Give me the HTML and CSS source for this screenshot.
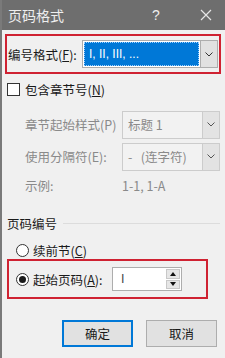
FILE: index.html
```html
<!DOCTYPE html>
<html lang="zh-CN">
<head>
  <meta charset="UTF-8">
  <meta name="viewport" content="width=device-width, initial-scale=1.0">
  <title>页码格式</title>
  <link rel="stylesheet" href="styles.css">
</head>
<body>
  <div class="dialog">
    <!-- title bar -->
    <div class="titlebar">
      <span class="title">页码格式</span>
      <span class="help">?</span>
      <span class="close">
        <svg width="12" height="12" viewBox="0 0 12 12"><path d="M1 1L11 11M11 1L1 11" stroke="#e6e6e6" stroke-width="1.2" fill="none"/></svg>
      </span>
    </div>

    <!-- number format -->
    <div class="redbox format-row">
      <span class="label">编号格式(<u>F</u>):</span>
      <div class="combo active">
        <div class="combo-value"><span class="focus">I, II, III, ...</span></div>
        <div class="combo-btn">
          <svg width="8" height="5" viewBox="0 0 8 5"><path d="M0.5 0.5L4 4L7.5 0.5" stroke="#333" fill="none"/></svg>
        </div>
      </div>
    </div>

    <div class="check-row">
      <span class="checkbox"></span>
      <span>包含章节号(<u>N</u>)</span>
    </div>

    <div class="chapter">
      <div class="field">
        <span class="label">章节起始样式(P)</span>
        <div class="combo disabled">
          <div class="combo-value">标题 1</div>
          <div class="combo-btn">
            <svg width="8" height="5" viewBox="0 0 8 5"><path d="M0.5 0.5L4 4L7.5 0.5" stroke="#555" fill="none"/></svg>
          </div>
        </div>
      </div>
      <div class="field">
        <span class="label">使用分隔符(E):</span>
        <div class="combo disabled">
          <div class="combo-value">-&nbsp;&nbsp;&nbsp;(连字符)</div>
          <div class="combo-btn">
            <svg width="8" height="5" viewBox="0 0 8 5"><path d="M0.5 0.5L4 4L7.5 0.5" stroke="#555" fill="none"/></svg>
          </div>
        </div>
      </div>
      <div class="field sample">
        <span class="label">示例:</span>
        <span>1-1, 1-A</span>
      </div>
    </div>

    <!-- page numbering -->
    <div class="group-title">
      <span>页码编号</span>
      <span class="rule"></span>
    </div>

    <div class="radio-row">
      <span class="radio"></span>
      <span>续前节(<u>C</u>)</span>
    </div>

    <div class="redbox start-row">
      <span class="radio checked"></span>
      <span class="label">起始页码(<u>A</u>):</span>
      <div class="spin">
        <div class="spin-value">I</div>
        <div class="spin-btns">
          <div class="spin-btn"><svg width="6" height="4" viewBox="0 0 6 4"><path d="M0 4L3 0L6 4Z" fill="#111"/></svg></div>
          <div class="spin-btn"><svg width="6" height="4" viewBox="0 0 6 4"><path d="M0 0L3 4L6 0Z" fill="#111"/></svg></div>
        </div>
      </div>
    </div>

    <div class="buttons">
      <button class="btn default">确定</button>
      <button class="btn">取消</button>
    </div>
  </div>
</body>
</html>
```

FILE: styles.css
```css
* {
  box-sizing: border-box;
}

body {
  margin: 0;
  font-family: "Noto Sans CJK SC", "Noto Sans", sans-serif;
  font-size: 12.5px;
  color: #1a1a1a;
  background: #f0f0f0;
}

.dialog {
  width: 225px;
  height: 358px;
  background: #f0f0f0;
  border-left: 2px solid #7a7a7a;
  overflow: hidden;
}

.titlebar {
  height: 30px;
  margin-left: -2px;
  background: #6e6e6e;
  color: #eeeeee;
  display: flex;
  align-items: center;
  padding-left: 8px;
}

.title {
  font-size: 14px;
  flex: 1;
}

.help {
  width: 20px;
  font-family: "Liberation Sans", sans-serif;
  font-size: 14px;
  margin-right: 28px;
}

.close {
  width: 25px;
  display: flex;
}

.redbox {
  border: 2px solid #cf2232;
  display: flex;
  align-items: center;
}

.format-row {
  margin: 4px 4px 0 3px;
  height: 40px;
  padding-left: 1px;
  padding-right: 1px;
}

.format-row .label {
  flex: 1;
}

.combo {
  display: flex;
  height: 28px;
  border: 1px solid #adadad;
}

.format-row .combo {
  width: 136px;
  background: #fff;
}

.combo-value {
  flex: 1;
  display: flex;
  align-items: center;
  padding: 1px;
}

.combo.active .focus {
  display: flex;
  align-items: center;
  width: 100%;
  height: 100%;
  background: #0078d7;
  color: #fff;
  padding-left: 4px;
  border: 1px dotted #9ccfff;
  font-family: "Liberation Sans", Arial, sans-serif;
  font-size: 12px;
}

.combo-btn {
  width: 17px;
  display: flex;
  align-items: center;
  justify-content: center;
  background: #e1e1e1;
  border-left: 1px solid #adadad;
}

.check-row {
  margin: 6px 0 0 5px;
  height: 18px;
  display: flex;
  align-items: center;
}

.checkbox {
  width: 13px;
  height: 13px;
  border: 1px solid #333;
  background: #fff;
  margin-right: 5px;
}

.chapter {
  padding-left: 23px;
  color: #8a8a8a;
}

.field {
  display: flex;
  align-items: center;
  height: 27px;
  margin-top: 5px;
  padding-right: 5px;
}

.field:first-child {
  margin-top: 13px;
}

.field .label {
  width: 97px;
}

.combo.disabled {
  flex: 1;
  border-color: #cccccc;
  background: #f2f2f2;
}

.combo.disabled .combo-value {
  padding-left: 5px;
}

.combo.disabled .combo-btn {
  background: #e3e3e3;
  border-left-color: #cccccc;
}

.field.sample {
  height: 18px;
  margin-top: 6px;
}

.group-title {
  display: flex;
  align-items: center;
  height: 18px;
  margin: 20px 5px 0 5px;
}

.group-title .rule {
  flex: 1;
  height: 1px;
  background: #dcdcdc;
  margin-left: 6px;
}

.radio-row {
  display: flex;
  align-items: center;
  height: 18px;
  margin: 9px 0 0 14px;
}

.radio {
  width: 13px;
  height: 13px;
  border: 1px solid #333;
  border-radius: 50%;
  background: #fff;
  margin-right: 4px;
  display: flex;
  align-items: center;
  justify-content: center;
}

.radio.checked::after {
  content: "";
  width: 7px;
  height: 7px;
  border-radius: 50%;
  background: #1a1a1a;
}

.start-row {
  margin: 0 17px 0 5px;
  height: 40px;
  padding-left: 7px;
}

.start-row .label {
  width: 79px;
}

.spin {
  display: flex;
  width: 70px;
  height: 24px;
  border: 1px solid #adadad;
  background: #fff;
}

.spin-value {
  flex: 1;
  padding-left: 8px;
  color: #444;
  display: flex;
  align-items: center;
  font-family: "Liberation Sans", sans-serif;
}

.spin-btns {
  width: 16px;
  display: flex;
  flex-direction: column;
  padding: 1px;
  gap: 1px;
}

.spin-btn {
  flex: 1;
  background: #e6e6e6;
  border: 1px solid #c8c8c8;
  display: flex;
  align-items: center;
  justify-content: center;
}

.buttons {
  display: flex;
  justify-content: flex-end;
  gap: 13px;
  margin-top: 21px;
  padding-right: 8px;
}

.btn {
  width: 71px;
  height: 27px;
  font-family: "Noto Sans CJK SC", sans-serif;
  font-size: 12.5px;
  color: #1a1a1a;
  background: #e1e1e1;
  border: 1px solid #adadad;
  padding: 0;
}

.btn.default {
  border: 2px solid #0078d7;
}
```
